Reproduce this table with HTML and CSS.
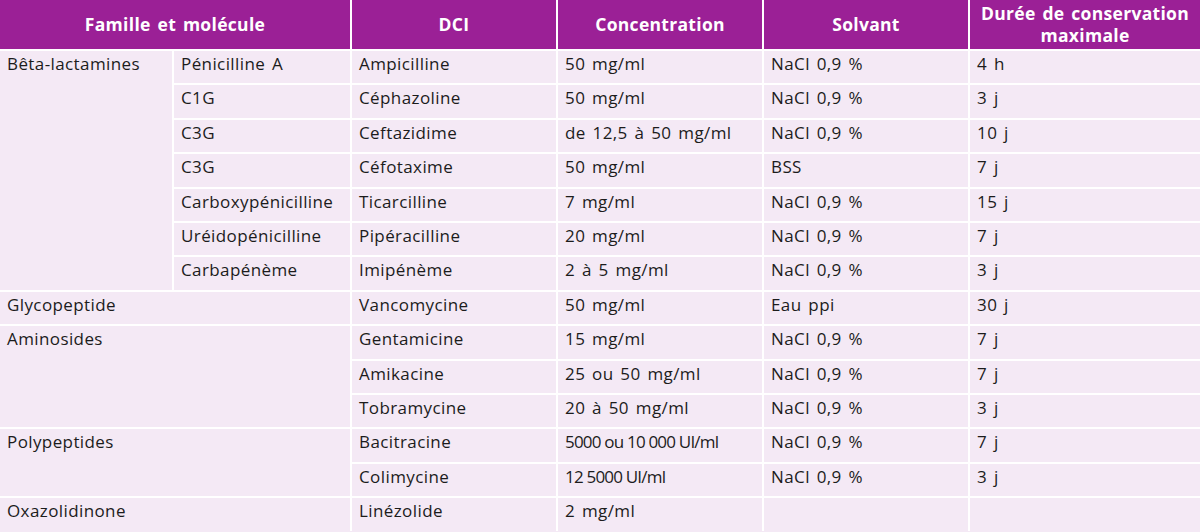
FILE: index.html
```html
<!DOCTYPE html>
<html lang="fr">
<head>
<meta charset="utf-8">
<title>Antibiotiques</title>
<link rel="stylesheet" href="styles.css">
</head>
<body>
<table class="tbl">
  <colgroup>
    <col class="c1"><col class="c2"><col class="c3"><col class="c4"><col class="c5"><col class="c6">
  </colgroup>
  <thead>
    <tr class="head">
      <th colspan="2">Famille et molécule</th>
      <th>DCI</th>
      <th>Concentration</th>
      <th>Solvant</th>
      <th>Durée de conservation<br>maximale</th>
    </tr>
  </thead>
  <tbody>
    <tr><td rowspan="7">Bêta-lactamines</td><td>Pénicilline A</td><td>Ampicilline</td><td>50 mg/ml</td><td>NaCl 0,9 %</td><td>4 h</td></tr>
    <tr><td>C1G</td><td>Céphazoline</td><td>50 mg/ml</td><td>NaCl 0,9 %</td><td>3 j</td></tr>
    <tr><td>C3G</td><td>Ceftazidime</td><td>de 12,5 à 50 mg/ml</td><td>NaCl 0,9 %</td><td>10 j</td></tr>
    <tr><td>C3G</td><td>Céfotaxime</td><td>50 mg/ml</td><td>BSS</td><td>7 j</td></tr>
    <tr><td>Carboxypénicilline</td><td>Ticarcilline</td><td>7 mg/ml</td><td>NaCl 0,9 %</td><td>15 j</td></tr>
    <tr><td>Uréidopénicilline</td><td>Pipéracilline</td><td>20 mg/ml</td><td>NaCl 0,9 %</td><td>7 j</td></tr>
    <tr><td>Carbapénème</td><td>Imipénème</td><td>2 à 5 mg/ml</td><td>NaCl 0,9 %</td><td>3 j</td></tr>
    <tr><td colspan="2">Glycopeptide</td><td>Vancomycine</td><td>50 mg/ml</td><td>Eau ppi</td><td>30 j</td></tr>
    <tr><td colspan="2" rowspan="3">Aminosides</td><td>Gentamicine</td><td>15 mg/ml</td><td>NaCl 0,9 %</td><td>7 j</td></tr>
    <tr><td>Amikacine</td><td>25 ou 50 mg/ml</td><td>NaCl 0,9 %</td><td>7 j</td></tr>
    <tr><td>Tobramycine</td><td>20 à 50 mg/ml</td><td>NaCl 0,9 %</td><td>3 j</td></tr>
    <tr><td colspan="2" rowspan="2">Polypeptides</td><td>Bacitracine</td><td class="tight">5000 ou 10 000 UI/ml</td><td>NaCl 0,9 %</td><td>7 j</td></tr>
    <tr><td>Colimycine</td><td class="tight">12 5000 UI/ml</td><td>NaCl 0,9 %</td><td>3 j</td></tr>
    <tr><td colspan="2">Oxazolidinone</td><td>Linézolide</td><td>2 mg/ml</td><td></td><td></td></tr>
  </tbody>
</table>
</body>
</html>
```

FILE: styles.css
```css
html, body {
  margin: 0;
  padding: 0;
  background: #f4e9f5;
}

.tbl {
  width: 1200px;
  border-collapse: collapse;
  border-style: hidden;
  table-layout: fixed;
  font-family: "Open Sans", "Liberation Sans", sans-serif;
  font-size: 17px;
  letter-spacing: 0.4px;
  word-spacing: 2px;
  color: #1c1c1c;
  background: #f4e9f5;
}

.c1 { width: 173px; }
.c2 { width: 178px; }
.c3 { width: 206px; }
.c4 { width: 206px; }
.c5 { width: 206px; }
.c6 { width: 231px; }

.tbl th,
.tbl td {
  border: 2px solid #ffffff;
  padding: 0 0 0 7px;
  line-height: 20px;
  text-align: left;
  vertical-align: top;
  white-space: nowrap;
}

.tbl td {
  height: 34.4px;
  box-sizing: border-box;
  padding-top: 3px;
}

.tbl td.tight {
  letter-spacing: -0.8px;
  word-spacing: 0;
}

.head th {
  background: #9b2096;
  color: #ffffff;
  font-size: 17.5px;
  font-weight: 700;
  letter-spacing: 0.3px;
  text-align: center;
  vertical-align: middle;
  height: 50px;
  box-sizing: border-box;
  padding: 0 4px 2px;
  line-height: 22px;
}
```
